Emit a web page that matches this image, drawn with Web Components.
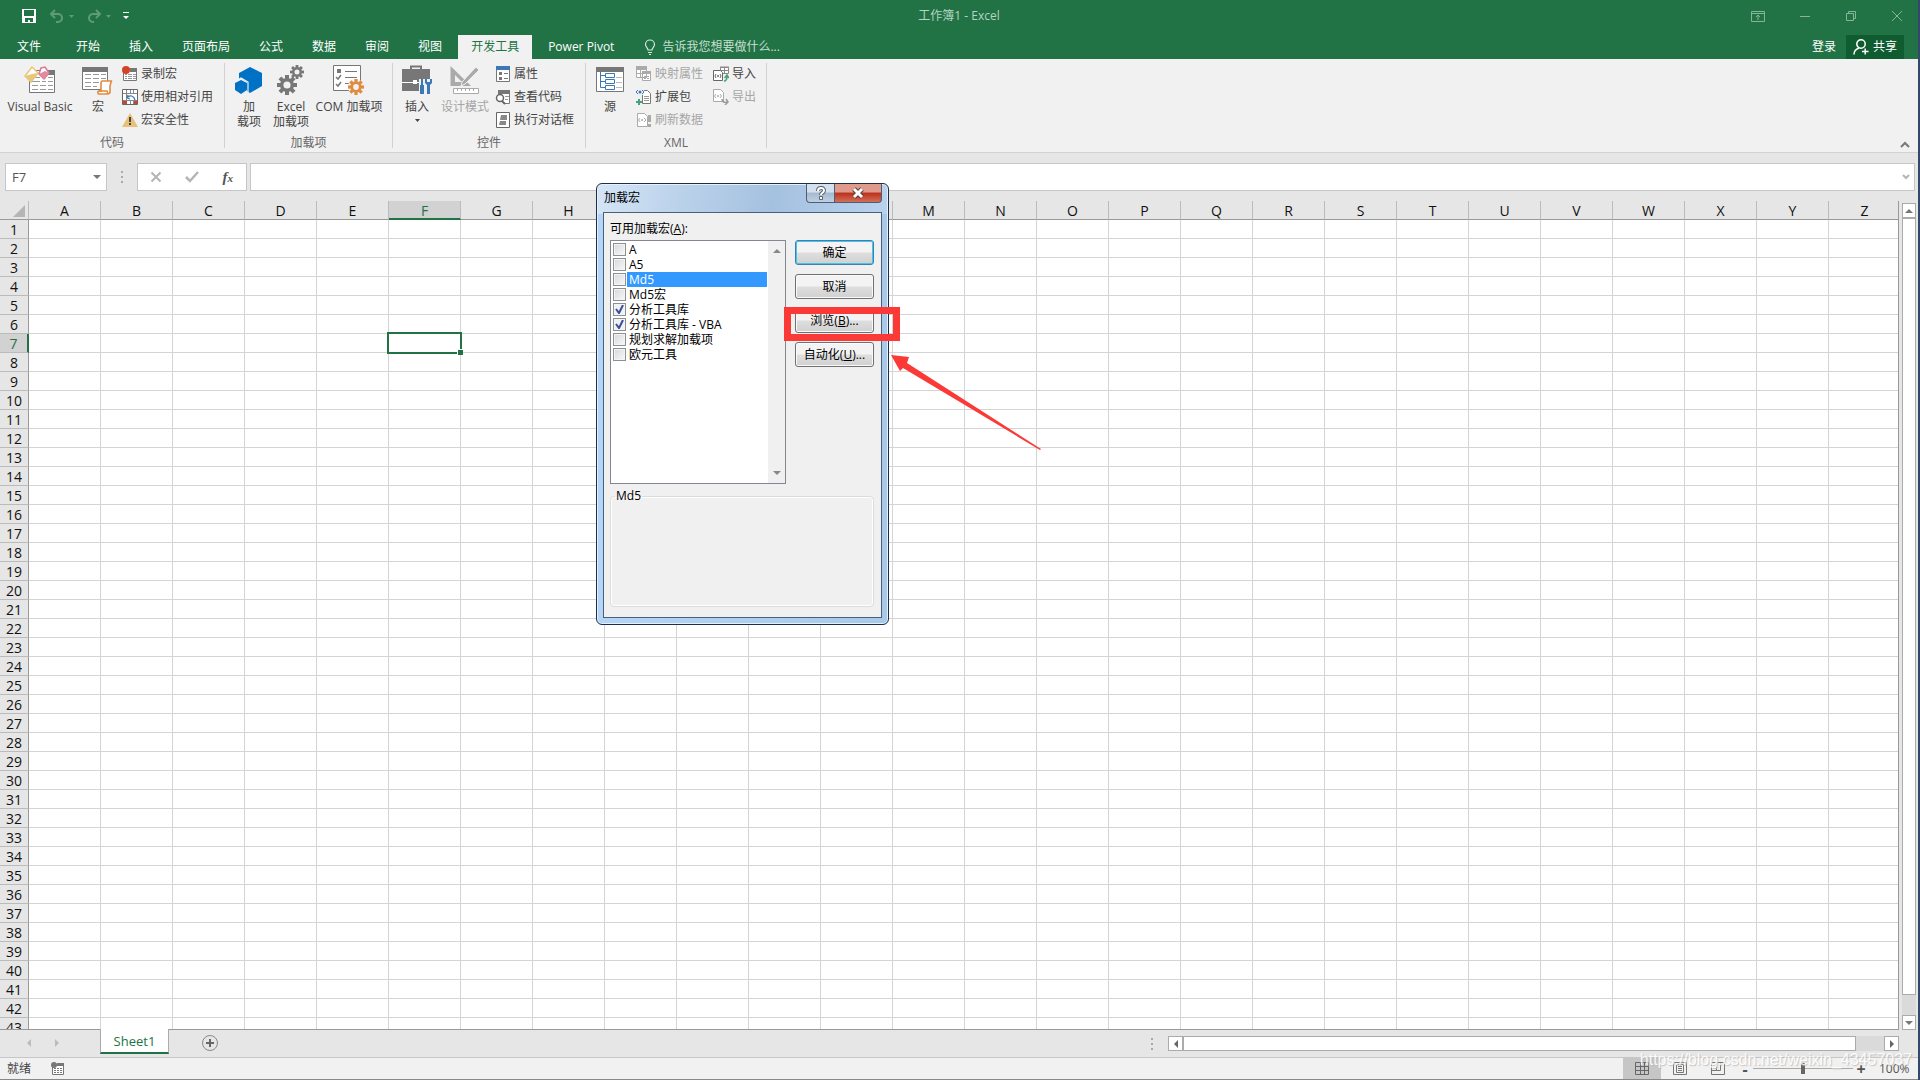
<!DOCTYPE html>
<html lang="zh-CN">
<head>
<meta charset="utf-8">
<title>工作簿1 - Excel</title>
<style>
  html, body { margin: 0; height: 100%; }
  body {
    font: 12px/16px "Open Sans", "Noto Sans", "Noto Sans CJK SC", sans-serif;
    color: #444;
    overflow: hidden;
  }
</style>
</head>
<body>
<excel-app></excel-app>

<script>
const ICONS = {
  save: [16, 16, '<path fill="#fff" d="M1 1h14v14H1z"/><path fill="#217346" d="M3 2h10v6H3zM4 10h8v4H9v-2H7v2H4z"/>'],
  undo: [16, 14, '<path d="M6 1L2 5l4 4M2 5h7a4 4 0 0 1 0 8H7" fill="none" stroke="#5d9b79" stroke-width="2"/>'],
  redo: [16, 14, '<path d="M10 1l4 4-4 4M14 5H7a4 4 0 0 0 0 8h1" fill="none" stroke="#5d9b79" stroke-width="2"/>'],
  caret: [5, 3, '<path d="M0 0h5L2.5 3z" fill="currentColor"/>'],
  custom: [6, 8, '<path d="M0 0h6v1H0zM0 4h6L3 7z" fill="#fff"/>'],
  ribbonopt: [14, 12, '<path d="M.5 1.500h13v10H.5zM.5 3.500h13M7 10V5M5 7l2-2 2 2" fill="none" stroke="#85b59a"/>'],
  min: [12, 12, '<path d="M1 6.500h10" stroke="#85b59a"/>'],
  restore: [12, 12, '<path d="M1.500 3.500h7v7h-7zM3.500 3V1.500h7v7H9" fill="none" stroke="#85b59a"/>'],
  close: [12, 12, '<path d="M1 1l10 10M11 1L1 11" stroke="#85b59a"/>'],
  bulb: [12, 16, '<path d="M4 11c0-2-2.500-3-2.500-5.500a4.500 4.500 0 0 1 9 0C10.500 8 8 9 8 11zM4 13.500h4M5 15.500h2" fill="none" stroke="#d7e8de" stroke-width="1.200"/>'],
  person: [16, 16, '<g fill="none" stroke="#fff" stroke-width="1.500"><circle cx="8" cy="5" r="4.200"/><path d="M1 15.500c0-3.500 2-5.500 5-6.500M9 12.500h6.500M12.200 9.500v6"/></g>'],
  vb: [32, 28, '<path d="M5.500 4.500h25v22h-25z" fill="#fff" stroke="#777"/><path d="M20 4h11v5H16z" fill="#777"/><path d="M8 11.500h8m2 0h4m2 0h5M8 15.500h8m2 0h4m2 0h5M8 19.500h6m2 0h6m2 0h5M8 23.500h6m2 0h6m2 0h5" stroke="#999"/><path d="M8 1l6 6-7 9-6-6z" fill="#fff" stroke="#e8c77d" stroke-width="1.500"/><path d="M1 10l7-2 6-1-7 9z" fill="#e8c77d"/><path d="M17 2l4-1 4 6-5 6-5-5z" fill="#fff" stroke="#d9778d" stroke-width="1.500"/><path d="M15 8l6-3 4 2-5 6z" fill="#e38b9e"/>'],
  macro: [32, 30, '<path d="M.5 2.500h25v22H.5z" fill="#fff" stroke="#777"/><path d="M0 2h26v5H0z" fill="#777"/><path d="M3 9.500h6m2 0h6m2 0h5M3 13.500h6m2 0h6m2 0h5M3 17.500h6m2 0h6M3 21.500h6m2 0h4" stroke="#999"/><path d="M20 16h10c-2 1-1 3-2 5v6c0 2-2 2-3 2h-8c-1 0-2-3 0-3h2V18c0-2 1-2 1-2z" fill="#fff" stroke="#e08b3e" stroke-width="1.600"/><path d="M17 26h8l1 3" fill="none" stroke="#e08b3e" stroke-width="1.500"/>'],
  record: [16, 16, '<path d="M1.500 2.500h13v12h-13z" fill="#fff" stroke="#777"/><path d="M8 2h7v4H8z" fill="#777"/><path d="M3 8.500h2m1 0h4m1 0h3M3 10.500h2m1 0h4m1 0h3M3 12.500h2m1 0h4m1 0h3" stroke="#999"/><circle cx="4" cy="4" r="4" fill="#d04525"/>'],
  relative: [16, 16, '<path d="M.5.500h15v15H.5z" fill="#fff" stroke="#666"/><path d="M1 4.500h14M1 11.500h14M4.500 1v14M8.500 1v3m0 8v3M11.500 1v14" stroke="#888"/><path d="M5 5h8v6H5z" fill="#fff"/><path d="M1 12h4v3H1zM12 12h3v3h-3z" fill="#c8472c"/><path d="M5 9l3 1M5 9l1-3M5 9c3-4 7-2 8 2" fill="none" stroke="#3b78b8" stroke-width="1.300"/>'],
  warn: [16, 14, '<path d="M8 0l8 14H0z" fill="#e8c07a"/><path d="M7 4h2v5H7zM7 10h2v2H7z" fill="#444"/>'],
  hex: [28, 28, '<path fill="#0072c6" d="M15 1l12 6v13l-12 7-3-2v-9l-6-4-2 1V7zM6 14l6 3v7l-6 4-6-4v-7z"/><path d="M3 14l3-2 7 4v10" fill="none" stroke="#f1f1f1" stroke-width="1.200"/>'],
  props: [14, 16, '<path d="M.5.500h13v15H.5z" fill="#fff" stroke="#777"/><path d="M0 0h14v4H0z" fill="#3b78b8"/><path d="M3 6h3v3H3zM3 11h3v3H3z" fill="#777"/><path d="M8 7.500h4M8 12.500h4" stroke="#777"/>'],
  viewcode: [16, 16, '<path d="M3.500 2.500h11v12h-5" fill="#fff" stroke="#777"/><path d="M3 1h12v4H3z" fill="#777"/><path d="M10 7.500h4M10 10.500h3" stroke="#999"/><circle cx="5" cy="9" r="3.500" fill="#fff" stroke="#666" stroke-width="1.500"/><path d="M7 12l3 3" stroke="#666" stroke-width="2"/>'],
  rundlg: [14, 16, '<path d="M.5.500h13v15H.5z" fill="#fff" stroke="#666"/><path d="M5 3h6v5H4zM4 9h6v4H3z" fill="#888"/>'],
  toolbox: [32, 30, '<path d="M10 4V1.500h10V4" fill="none" stroke="#777" stroke-width="2"/><path d="M1 4h28v13H1zM1 18h18v8H1z" fill="#777"/><path d="M1 17.500h11m4 0h13" stroke="#fff"/><path d="M12 15h4v4h-4z" fill="#fff"/><path d="M18 14h13v15H18z" fill="#f1f1f1"/><path d="M20 14h2v7h-2zM19 20h4v9h-4zM24 14v4l2 2v9h3v-9l2-2v-4h-2v3h-3v-3z" fill="#3b78b8"/>'],
  design: [32, 30, '<path d="M1.500 1v20H22z" fill="#aaa"/><path d="M6 10v7h7z" fill="#f1f1f1"/><path d="M12 21l1-4L27 2l3 3-14 14z" fill="#aaa" stroke="#f1f1f1"/><path d="M4.500 23.500h25v5h-25z" fill="#fff" stroke="#aaa"/><path d="M8.500 24v2m4-2v2m4-2v2m4-2v2m4-2v2" stroke="#aaa"/>'],
  source: [28, 26, '<path d="M.5.500h27v24H.5z" fill="#fff" stroke="#777"/><path d="M0 0h28v5H0z" fill="#777"/><path d="M20 10.500h6m-6 5h6m-6 5h6" stroke="#bbb"/><path d="M4.500 5v15.500H9M4.500 8.500H9m-4.500 6H9" fill="none" stroke="#3b78b8"/><path d="M9.500 6.500h9v4h-9zM9.500 12.500h9v4h-9zM9.500 18.500h9v4h-9z" fill="#fff" stroke="#3b78b8"/>'],
  mapprops: [16, 16, '<path d="M.5.500h10v11H.5zM6.500 6.500h8v8h-8z" fill="#fff" stroke="#aaa"/><path d="M0 0h11v4H0zM6 5h9v3H6z" fill="#aaa"/><path d="M4.500 4v7M1 7.500h5M8 10.500h2m1 0h2M8 12.500h2m1 0h2" stroke="#aaa"/>'],
  expand: [16, 16, '<path d="M6.500 1.500h5l3 3v10h-8z" fill="#fff" stroke="#777"/><path d="M8 7.500h5M8 9.500h5M8 11.500h5" stroke="#999"/><path d="M0 0h8v6H0z" fill="#f1f1f1"/><path d="M2 1L0 3l2 2M6 1l2 2-2 2" fill="none" stroke="#3b78b8"/><circle cx="4" cy="3" r="1.500" fill="#3b78b8"/><path d="M3 10v6M0 13h6" stroke="#45a17a" stroke-width="2"/>'],
  refresh: [16, 16, '<path d="M1.500 1.500h7l3 3v10h-10z" fill="#fff" stroke="#aaa"/><path d="M4 6L2.500 8 4 10M8 6l2 2-2 2" fill="none" stroke="#aaa"/><circle cx="6" cy="8" r="1" fill="#aaa"/><path d="M12 3h3v7h-3zM12 12h3v3h-3z" fill="#aaa"/>'],
  imp: [16, 16, '<path d="M7.500 1.500h8v6h-8z" fill="#fff" stroke="#888"/><path d="M7 1h9M8 4.500h7M11.500 1v6" stroke="#888"/><path d="M.5 4.500h7l2 2v8h-9z" fill="#fff" stroke="#666"/><path d="M3 8l-1 2 1 2M7 8l1 2-1 2" fill="none" stroke="#666"/><circle cx="5" cy="10" r="1" fill="#666"/><path d="M11 15c2 0 3-1 3-5M11.500 12L14 9l2 3" fill="none" stroke="#45a17a" stroke-width="1.500"/>'],
  exp: [16, 16, '<path d="M.5.500h7l3 3v9H.5z" fill="#fff" stroke="#aaa"/><path d="M3 5L1.500 7 3 9M7 5l1.500 2L7 9" fill="none" stroke="#aaa"/><circle cx="5" cy="7" r="1" fill="#aaa"/><path d="M9 10c0 3 2 4 6 3M13 10l2 3-3 3" fill="none" stroke="#999" stroke-width="1.500"/>'],
  cross: [12, 12, '<path d="M1.500 1.500l9 9M10.500 1.500l-9 9" stroke="#b5b5b5" stroke-width="2"/>'],
  tick: [14, 12, '<path d="M1 6l4 4 8-9" fill="none" stroke="#b5b5b5" stroke-width="2.500"/>'],
  up: [10, 7, '<path d="M1 6l4-4 4 4" fill="none" stroke="#777" stroke-width="2"/>'],
  down: [8, 6, '<path d="M1 1l3 3 3-3" fill="none" stroke="#b5b5b5" stroke-width="2"/>'],
  dots: [3, 12, '<path d="M0 0h2v2H0zM0 5h2v2H0zM0 10h2v2H0z" fill="#aaa"/>'],
  corner: [12, 12, '<path d="M12 0v12H0z" fill="#b5b5b5"/>'],
  plus: [16, 16, '<circle cx="8" cy="8" r="7.500" fill="none" stroke="#888"/><path d="M8 4v8M4 8h8" stroke="#666" stroke-width="2"/>'],
  triL: [4, 8, '<path d="M4 0v8L0 4z" fill="currentColor"/>'],
  triR: [4, 8, '<path d="M0 0v8l4-4z" fill="currentColor"/>'],
  triU: [8, 4, '<path d="M0 4h8L4 0z" fill="currentColor"/>'],
  triD: [8, 4, '<path d="M0 0h8L4 4z" fill="currentColor"/>'],
  recstat: [14, 14, '<path d="M1.500 3.500h11v9h-11z" fill="#fff" stroke="#777"/><path d="M6 1h7v3H6z" fill="#777"/><path d="M3 6.500h2m1 0h2m1 0h2M3 8.500h2m1 0h2m1 0h2M3 10.500h2m1 0h2m1 0h2" stroke="#777"/><circle cx="3" cy="3" r="3" fill="#777"/>'],
  vnormal: [14, 14, '<path d="M.5.500h13v12H.5zM.5 4.500h13M.5 8.500h13M5.500.500v12M9.500.500v12" fill="none" stroke="#666"/>'],
  vpage: [14, 14, '<path d="M.5.500h13v12H.5zM3.500 2.500h7v8h-7zM5 4.500h4M5 6.500h4M5 8.500h4" fill="none" stroke="#777"/>'],
  vbreak: [14, 14, '<path d="M.5.500h13v12H.5zM1 8.500h4.500V1M5.500 8.500h4V1" fill="none" stroke="#777"/>'],
  help: [12, 14, '<path d="M3 5c0-4 6-4 6-.5C9 7 6 6.500 6 9" fill="none" stroke="#5a6472" stroke-width="4"/><path d="M3 5c0-4 6-4 6-.5C9 7 6 6.500 6 9" fill="none" stroke="#fff" stroke-width="2"/><path d="M4.500 10.500h3v3h-3z" fill="#fff" stroke="#5a6472"/>'],
  xbold: [14, 12, '<path d="M3 2l8 8M11 2l-8 8" stroke="#5f3a3a" stroke-width="5"/><path d="M3 2l8 8M11 2l-8 8" stroke="#fff" stroke-width="3"/>']
};

// gear: four crossed bars give the eight teeth
function gear(cx, cy, r, color) {
  let teeth = '';
  for (let i = 0; i < 4; i++) {
    teeth += `<rect x="${cx - r / 5}" y="${cy - r}" width="${r / 2.5}" height="${r * 2}" fill="${color}" transform="rotate(${i * 45} ${cx} ${cy})"/>`;
  }
  return `<g>${teeth}<circle cx="${cx}" cy="${cy}" r="${r * 0.7}" fill="${color}"/><circle cx="${cx}" cy="${cy}" r="${r * 0.36}" fill="#f1f1f1"/></g>`;
}
ICONS.gears = [28, 30, gear(20, 7, 7, '#777') + gear(10, 20, 10, '#777')];
ICONS.com = [32, 30, '<path d="M.5.500h27v25H.5z" fill="#fff" stroke="#777"/><path d="M4 4h4v4H4z" fill="#777"/><path d="M12 6.500h12M12 12.500h12M12 18.500h5" stroke="#777"/><path d="M3 12l2 2 3-4M3 19l2 2 3-4" fill="none" stroke="#777" stroke-width="1.500"/><circle cx="23" cy="22" r="8" fill="#f1f1f1"/>' + gear(23, 22, 8, '#e08b3e')];

class XIcon extends HTMLElement {
  connectedCallback() {
    const [w, h, body] = ICONS[this.getAttribute('name')];
    this.attachShadow({ mode: 'open' }).innerHTML = `
      <style>
        :host { display: inline-flex; flex: none; }
        svg { display: block; }
      </style>
      <svg width="${w}" height="${h}" viewBox="0 0 ${w} ${h}" aria-hidden="true">${body}</svg>`;
  }
}

class TitleBar extends HTMLElement {
  constructor() {
    super();
    this.attachShadow({ mode: 'open' }).innerHTML = `
      <style>
        :host { display: grid; grid-template-columns: 1fr auto 1fr; align-items: center; height: 32px; background: #217346; color: #b5d3c1; }
        div { display: flex; align-items: center; }
        .quick { padding-left: 21px; gap: 12px; }
        .pair { gap: 4px; color: #5d9b79; }
        .win { justify-content: flex-end; gap: 34px; padding-right: 15px; }
        button { display: flex; padding: 0; border: 0; background: none; color: inherit; }
      </style>
      <div class="quick">
        <button aria-label="保存"><x-icon name="save"></x-icon></button>
        <div class="pair"><button aria-label="撤消"><x-icon name="undo"></x-icon></button><x-icon name="caret"></x-icon></div>
        <div class="pair"><button aria-label="恢复"><x-icon name="redo"></x-icon></button><x-icon name="caret"></x-icon></div>
        <button aria-label="自定义"><x-icon name="custom"></x-icon></button>
      </div>
      <span><slot></slot></span>
      <div class="win">
        <button aria-label="功能区选项"><x-icon name="ribbonopt"></x-icon></button>
        <button aria-label="最小化"><x-icon name="min"></x-icon></button>
        <button aria-label="还原"><x-icon name="restore"></x-icon></button>
        <button aria-label="关闭"><x-icon name="close"></x-icon></button>
      </div>`;
  }
}

class RibbonTabs extends HTMLElement {
  constructor() {
    super();
    const tabs = ['文件', '开始', '插入', '页面布局', '公式', '数据', '审阅', '视图', '开发工具', 'Power Pivot'];
    this.attachShadow({ mode: 'open' }).innerHTML = `
      <style>
        :host { display: flex; align-items: flex-end; height: 27px; background: #217346; color: #fff; }
        nav { display: flex; gap: 3px; padding-left: 4px; }
        button { display: flex; align-items: center; height: 24px; padding: 0 13px; border: 0; background: none; color: inherit; font: inherit; white-space: nowrap; }
        .file { margin-right: 6px; }
        .on { background: #f1f1f1; color: #217346; }
        .tell { gap: 6px; margin-left: 4px; color: #c8dfd1; }
        .right { display: flex; margin-left: auto; margin-right: 14px; align-items: center; }
        .login { padding-right: 10px; }
        .share { gap: 4px; padding: 0 7px; background: #0e5c2f; }
      </style>
      <nav>${tabs.map((t, i) => `<button class="${i === 0 ? 'file' : ''}${t === '开发工具' ? 'on' : ''}">${t}</button>`).join('')}</nav>
      <button class="tell"><x-icon name="bulb"></x-icon>告诉我您想要做什么...</button>
      <div class="right">
        <button class="login">登录</button>
        <button class="share"><x-icon name="person"></x-icon>共享</button>
      </div>`;
  }
}

class RibbonGroup extends HTMLElement {
  constructor() {
    super();
    this.attachShadow({ mode: 'open' }).innerHTML = `
      <style>
        :host { display: flex; flex-direction: column; box-sizing: border-box; margin: 4px 0; border-right: 1px solid #d2d2d2; }
        .body { display: flex; flex: none; height: 72px; }
        .name { flex: none; text-align: center; color: #666; line-height: 16px; }
      </style>
      <div class="body"><slot></slot></div>
      <div class="name"></div>`;
  }
  connectedCallback() {
    this.shadowRoot.querySelector('.name').textContent = this.getAttribute('label');
  }
}

class BigButton extends HTMLElement {
  connectedCallback() {
    this.attachShadow({ mode: 'open' }).innerHTML = `
      <style>
        :host { display: block; flex: none; }
        button { display: flex; flex-direction: column; align-items: center; width: 100%; padding: 1px 0 0; border: 0; background: none; color: #444; font: inherit; line-height: 15px; white-space: nowrap; }
        button:disabled { color: #a6a6a6; }
        .pic { display: flex; align-items: center; height: 32px; margin-bottom: 3px; }
        .drop { margin-top: 5px; }
      </style>
      <button ${this.hasAttribute('disabled') ? 'disabled' : ''}>
        <span class="pic"><x-icon name="${this.getAttribute('icon')}"></x-icon></span>
        <slot></slot>
        ${this.hasAttribute('drop') ? '<x-icon class="drop" name="caret"></x-icon>' : ''}
      </button>`;
  }
}

class SmallButton extends HTMLElement {
  connectedCallback() {
    this.attachShadow({ mode: 'open' }).innerHTML = `
      <style>
        :host { display: block; }
        button { display: flex; align-items: center; gap: 3px; height: 23px; padding: 0; border: 0; background: none; color: #444; font: inherit; white-space: nowrap; }
        button:disabled { color: #a6a6a6; }
        .pic { display: flex; justify-content: center; width: 16px; }
      </style>
      <button ${this.hasAttribute('disabled') ? 'disabled' : ''}>
        <span class="pic"><x-icon name="${this.getAttribute('icon')}"></x-icon></span><slot></slot>
      </button>`;
  }
}

class RibbonBar extends HTMLElement {
  constructor() {
    super();
    this.attachShadow({ mode: 'open' }).innerHTML = `
      <style>
        :host { display: flex; height: 93px; background: #f1f1f1; border-bottom: 1px solid #d2d2d2; }
        .g1 { width: 225px; } .g2 { width: 168px; } .g3 { width: 193px; } .g4 { width: 181px; }
        .w36 { width: 36px; } .w48 { width: 48px; } .w80 { width: 80px; }
        .col { margin: -1px 0 0 6px; }
        .col + .col { margin-left: 10px; }
        .big + .tight { margin-left: 2px; }
        .fold { margin: auto 8px 4px auto; padding: 0; border: 0; background: none; display: flex; }
      </style>
      <ribbon-group class="g1" label="代码">
        <big-button class="w80" icon="vb">Visual Basic</big-button>
        <big-button class="w36" icon="macro">宏</big-button>
        <div class="col">
          <small-button icon="record">录制宏</small-button>
          <small-button icon="relative">使用相对引用</small-button>
          <small-button icon="warn">宏安全性</small-button>
        </div>
      </ribbon-group>
      <ribbon-group class="g2" label="加载项">
        <big-button class="w48" icon="hex">加<br>载项</big-button>
        <big-button class="w36" icon="gears">Excel<br>加载项</big-button>
        <big-button class="w80" icon="com">COM 加载项</big-button>
      </ribbon-group>
      <ribbon-group class="g3" label="控件">
        <big-button class="w48" icon="toolbox" drop>插入</big-button>
        <big-button class="w48" icon="design" disabled>设计模式</big-button>
        <div class="col">
          <small-button icon="props">属性</small-button>
          <small-button icon="viewcode">查看代码</small-button>
          <small-button icon="rundlg">执行对话框</small-button>
        </div>
      </ribbon-group>
      <ribbon-group class="g4" label="XML">
        <big-button class="big w48" icon="source">源</big-button>
        <div class="col tight">
          <small-button icon="mapprops" disabled>映射属性</small-button>
          <small-button icon="expand">扩展包</small-button>
          <small-button icon="refresh" disabled>刷新数据</small-button>
        </div>
        <div class="col">
          <small-button icon="imp">导入</small-button>
          <small-button icon="exp" disabled>导出</small-button>
        </div>
      </ribbon-group>
      <button class="fold" aria-label="折叠功能区"><x-icon name="up"></x-icon></button>`;
  }
}

class FormulaBar extends HTMLElement {
  constructor() {
    super();
    this.attachShadow({ mode: 'open' }).innerHTML = `
      <style>
        :host { display: flex; padding: 10px 3px 10px 5px; background: #e6e6e6; height: 28px; }
        div { display: flex; align-items: center; box-sizing: border-box; border: 1px solid #c6c6c6; background: #fff; }
        input { flex: 1; min-width: 0; border: 0; padding: 0 6px; outline: 0; background: none; color: #555; font: inherit; }
        button { display: flex; padding: 0; border: 0; background: none; color: #777; }
        .name { width: 102px; padding-right: 5px; }
        .name input { font-size: 13px; }
        .sep { align-self: center; margin: 0 13px 0 14px; }
        .tools { width: 110px; justify-content: space-between; padding: 0 13px 0 12px; margin-right: 3px; }
        .fx { font: italic bold 15px/16px "Liberation Serif", serif; color: #555; }
        .fx small { font-size: 11px; }
        .text { flex: 1; padding-right: 4px; }
      </style>
      <div class="name"><input aria-label="名称框" value="F7"><button aria-label="名称列表"><x-icon name="triD"></x-icon></button></div>
      <x-icon class="sep" name="dots"></x-icon>
      <div class="tools">
        <button aria-label="取消"><x-icon name="cross"></x-icon></button>
        <button aria-label="输入"><x-icon name="tick"></x-icon></button>
        <button class="fx" aria-label="插入函数"><span>f<small>x</small></span></button>
      </div>
      <div class="text"><input aria-label="编辑栏"><button aria-label="展开"><x-icon name="down"></x-icon></button></div>`;
  }
}

class SheetGrid extends HTMLElement {
  constructor() {
    super();
    const letters = 'ABCDEFGHIJKLMNOPQRSTUVWXYZ'.split('');
    let rows = '';
    for (let r = 1; r <= 43; r++) {
      rows += `<tr><th class="${r === 7 ? 'on' : ''}">${r}</th>` +
        letters.map(c => `<td${r === 7 && c === 'F' ? ' class="active"' : ''}></td>`).join('') + '</tr>';
    }
    this.attachShadow({ mode: 'open' }).innerHTML = `
      <style>
        :host { display: flex; flex: 1; min-height: 0; background: #e6e6e6; }
        .view { flex: 1; min-width: 0; overflow: hidden; box-sizing: border-box; border-right: 1px solid #999; border-bottom: 1px solid #999; }
        table { table-layout: fixed; width: 1901px; border-collapse: separate; border-spacing: 0; background: #fff; }
        col.head { width: 29px; }
        th, td { box-sizing: border-box; padding: 0; overflow: hidden; }
        th { padding-top: 2px; font-size: 14px; line-height: 16px; font-weight: normal; color: #111; background: #e6e6e6; }
        thead th { height: 19px; border-right: 1px solid #bbb; border-bottom: 1px solid #999; }
        thead th.on { background: #d2d2d2; color: #217346; border-bottom: 2px solid #217346; line-height: 15px; }
        thead x-icon { display: flex; justify-content: flex-end; padding-right: 3px; }
        tbody th { height: 19px; border-right: 1px solid #999; border-bottom: 1px solid #bbb; }
        tbody th.on { background: #d2d2d2; color: #217346; border-right: 2px solid #217346; }
        td { border-right: 1px solid #d4d4d4; border-bottom: 1px solid #d4d4d4; }
        td.active { position: relative; overflow: visible; }
        td.active::before { content: ""; position: absolute; inset: -2px; border: 2px solid #217346; }
        td.active::after { content: ""; position: absolute; right: -3px; bottom: -3px; width: 5px; height: 5px; background: #217346; border: 1px solid #fff; border-width: 1px 0 0 1px; }
        .bar { display: flex; flex-direction: column; width: 14px; margin: 2px 2px 0 3px; background: #dadada; }
        .bar button, .thumb { display: flex; align-items: center; justify-content: center; box-sizing: border-box; padding: 0; border: 1px solid #ababab; background: #fff; color: #777; }
        .bar button { height: 15px; }
        .thumb { flex: 1; margin-bottom: 20px; }
      </style>
      <div class="view">
        <table>
          <colgroup><col class="head"><col span="26"></colgroup>
          <thead><tr><th><x-icon name="corner"></x-icon></th>${letters.map(c => `<th class="${c === 'F' ? 'on' : ''}">${c}</th>`).join('')}</tr></thead>
          <tbody>${rows}</tbody>
        </table>
      </div>
      <div class="bar">
        <button aria-label="向上"><x-icon name="triU"></x-icon></button>
        <div class="thumb"></div>
        <button aria-label="向下"><x-icon name="triD"></x-icon></button>
      </div>`;
  }
}

class SheetTabs extends HTMLElement {
  constructor() {
    super();
    this.attachShadow({ mode: 'open' }).innerHTML = `
      <style>
        :host { display: flex; height: 27px; background: #e6e6e6; border-bottom: 1px solid #c6c6c6; }
        button { display: flex; align-items: center; justify-content: center; padding: 0; border: 0; background: none; font: inherit; color: #bbb; }
        .nav { display: flex; gap: 24px; width: 73px; height: 25px; padding-left: 27px; }
        .tab { box-sizing: border-box; width: 69px; height: 25px; margin-top: -1px; background: #fff; color: #217346; font-size: 13px; border: 1px solid #ababab; border-top: 0; border-bottom: 2px solid #217346; }
        .add { height: 26px; margin-left: 33px; }
        .scroll { display: flex; align-items: center; flex: 0 1 748px; margin: 6px 19px 6px auto; }
        .scroll x-icon.grip { margin-right: 14px; }
        .scroll button { box-sizing: border-box; width: 15px; height: 15px; border: 1px solid #ababab; background: #fff; color: #666; }
        .track { display: flex; flex: 1; height: 15px; background: #dadada; }
        .thumb { flex: 1; margin-right: 28px; box-sizing: border-box; border: 1px solid #ababab; background: #fff; }
      </style>
      <div class="nav">
        <button aria-label="上一个"><x-icon name="triL"></x-icon></button>
        <button aria-label="下一个"><x-icon name="triR"></x-icon></button>
      </div>
      <button class="tab">Sheet1</button>
      <button class="add" aria-label="新工作表"><x-icon name="plus"></x-icon></button>
      <div class="scroll">
        <x-icon class="grip" name="dots"></x-icon>
        <button aria-label="向左"><x-icon name="triL"></x-icon></button>
        <div class="track"><div class="thumb"></div></div>
        <button aria-label="向右"><x-icon name="triR"></x-icon></button>
      </div>`;
  }
}

class StatusBar extends HTMLElement {
  constructor() {
    super();
    this.attachShadow({ mode: 'open' }).innerHTML = `
      <style>
        :host { display: flex; position: relative; align-items: center; height: 21px; background: #f1f1f1; border-bottom: 1px solid #888; padding-left: 7px; }
        button { display: flex; align-items: center; justify-content: center; width: 38px; height: 21px; padding: 0; border: 0; background: none; color: #555; font: 16px/16px "Open Sans", sans-serif; }
        .rec { width: auto; margin-left: 20px; }
        .views { display: flex; margin-left: auto; }
        .views .on { background: #c6c6c6; }
        .zoom { width: 16px; font-weight: bold; }
        input { appearance: none; width: 100px; height: 12px; margin: 0; background: linear-gradient(#aaa, #aaa) center / 100% 1px no-repeat; }
        input::-webkit-slider-thumb { appearance: none; width: 4px; height: 11px; background: #666; }
        output { width: 33px; margin: 0 6px 0 10px; color: #555; }
        .mark { position: absolute; right: 6px; top: -8px; font: 16px/20px "Liberation Sans", sans-serif; color: #fff; opacity: .85; text-shadow: 1px 1px 1px #bbb; pointer-events: none; }
      </style>
      <span>就绪</span>
      <button class="rec" aria-label="录制宏"><x-icon name="recstat"></x-icon></button>
      <div class="views">
        <button class="on" aria-label="普通"><x-icon name="vnormal"></x-icon></button>
        <button aria-label="页面布局"><x-icon name="vpage"></x-icon></button>
        <button aria-label="分页预览"><x-icon name="vbreak"></x-icon></button>
      </div>
      <button class="zoom" aria-label="缩小">-</button>
      <input type="range" aria-label="显示比例" min="0" max="200" value="100">
      <button class="zoom" aria-label="放大">+</button>
      <output>100%</output>
      <span class="mark">https://blog.csdn.net/weixin_43457037</span>`;
  }
}

class AddinDialog extends HTMLElement {
  constructor() {
    super();
    const items = [['A'], ['A5'], ['Md5', 'sel'], ['Md5宏'], ['分析工具库', 'on'], ['分析工具库 - VBA', 'on'], ['规划求解加载项'], ['欧元工具']];
    this.attachShadow({ mode: 'open' }).innerHTML = `
      <style>
        :host { display: flex; flex-direction: column; box-sizing: border-box; width: 293px; height: 442px; padding: 0 6px 6px; border: 1px solid #1c2f45; border-radius: 6px; color: #000;
          background: linear-gradient(100deg, #d5e5f6 0, #bad1ea 30%, #a5c1e0 60%, #b9d3ee 100%) top / 100% 30px no-repeat, linear-gradient(90deg, #b4d5f7, #a9c9ea); box-shadow: inset 0 0 0 1px #e4f0fb; }
        header { display: flex; align-items: flex-start; height: 28px; }
        h1 { margin: 6px auto 0 1px; font: inherit; }
        header button { display: flex; align-items: center; justify-content: center; height: 19px; padding: 0; border: 1px solid #4d5e72; border-top: 0; }
        .help { width: 29px; border-radius: 0 0 0 4px; background: linear-gradient(#d3e0ee 45%, #a5b9cf 50%, #bfd1e4); }
        .x { width: 48px; margin-left: -1px; border-radius: 0 0 4px 0; background: linear-gradient(#e09a8b 45%, #bb2f1c 50%, #d3705a); }
        .client { display: flex; flex-direction: column; flex: 1; padding: 7px 7px 10px 6px; border: 1px solid #4a6078; background: #f0f0f0; }
        .label { height: 20px; line-height: 18px; }
        .row { display: flex; gap: 9px; }
        .list { display: flex; box-sizing: border-box; width: 176px; height: 244px; border: 1px solid #828790; background: #fff; }
        ul { flex: 1; margin: 0; padding: 1px 1px 0 2px; list-style: none; }
        li { display: flex; align-items: center; height: 15px; white-space: nowrap; }
        li input { appearance: none; flex: none; box-sizing: border-box; width: 13px; height: 13px; margin: 0 1px 0 0; border: 1px solid #8e8f8f; background: linear-gradient(135deg, #d5d8dc, #f8f8f8); box-shadow: inset 0 0 0 1px #f4f4f4; }
        li input:checked { background: #eef1f6 url("data:image/svg+xml,%3Csvg xmlns='http://www.w3.org/2000/svg' viewBox='0 0 11 11'%3E%3Cpath d='M2 5l3 4 4-8' fill='none' stroke='%233c4f94' stroke-width='2'/%3E%3C/svg%3E") center / 11px no-repeat; }
        li label { flex: 1; padding-left: 2px; line-height: 15px; }
        .sel label { background: #3399ff; color: #fff; }
        .bar { display: flex; flex-direction: column; justify-content: space-between; align-items: center; width: 17px; padding: 8px 0; box-sizing: border-box; background: #f0f0f0; color: #888; }
        .btns { display: flex; flex-direction: column; gap: 9px; flex: 1; }
        .btns button { height: 25px; padding: 0; border: 1px solid #707070; border-radius: 3px; background: linear-gradient(#f3f3f3 48%, #dedede 52%, #d0d0d0); box-shadow: inset 0 0 0 1px #fafafa; color: #000; font: inherit; }
        .btns .ok { border-color: #3c7fb1; box-shadow: inset 0 0 0 1px #48c4ea; }
        fieldset { flex: 1; min-height: 0; margin: 4px 0 0; padding: 0 4px; border: 1px solid #dcdcdc; border-radius: 4px; box-shadow: inset 0 0 0 1px #fff; }
        legend { padding: 0 1px; }
      </style>
      <header>
        <h1>加载宏</h1>
        <button class="help" aria-label="帮助"><x-icon name="help"></x-icon></button>
        <button class="x" aria-label="关闭"><x-icon name="xbold"></x-icon></button>
      </header>
      <div class="client">
        <div class="label">可用加载宏(<u>A</u>):</div>
        <div class="row">
          <div class="list">
            <ul>${items.map(([t, s], i) => `<li class="${s === 'sel' ? 'sel' : ''}"><input type="checkbox" id="i${i}"${s === 'on' ? ' checked' : ''}><label for="i${i}">${t}</label></li>`).join('')}</ul>
            <div class="bar"><x-icon name="triU"></x-icon><x-icon name="triD"></x-icon></div>
          </div>
          <div class="btns">
            <button class="ok">确定</button>
            <button>取消</button>
            <button>浏览(<u>B</u>)...</button>
            <button>自动化(<u>U</u>)...</button>
          </div>
        </div>
        <fieldset><legend>Md5</legend></fieldset>
      </div>`;
  }
}

// red frame and arrow pointing at the browse button
class CalloutMark extends HTMLElement {
  constructor() {
    super();
    this.attachShadow({ mode: 'open' }).innerHTML = `
      <style>:host { display: block; } svg { display: block; }</style>
      <svg width="260" height="146" viewBox="0 0 260 146" aria-hidden="true">
        <path d="M3.500 3.500h109v27h-109z" fill="none" stroke="#fb3a38" stroke-width="7"/>
        <path d="M107 48l18 2-2 6L257 142l-1 1L119 61l-3 3z" fill="#fb3a38"/>
      </svg>`;
  }
}

class ExcelApp extends HTMLElement {
  constructor() {
    super();
    this.attachShadow({ mode: 'open' }).innerHTML = `
      <style>
        :host { display: flex; flex-direction: column; position: relative; box-sizing: border-box; height: 100vh; border-right: 2px solid #34486b; background: #e6e6e6; }
        addin-dialog { position: absolute; left: 596px; top: 183px; }
        callout-mark { position: absolute; left: 784px; top: 307px; }
      </style>
      <title-bar>工作簿1 - Excel</title-bar>
      <ribbon-tabs></ribbon-tabs>
      <ribbon-bar></ribbon-bar>
      <formula-bar></formula-bar>
      <sheet-grid></sheet-grid>
      <sheet-tabs></sheet-tabs>
      <status-bar></status-bar>
      <addin-dialog></addin-dialog>
      <callout-mark></callout-mark>`;
  }
}

customElements.define('x-icon', XIcon);
customElements.define('title-bar', TitleBar);
customElements.define('ribbon-tabs', RibbonTabs);
customElements.define('ribbon-group', RibbonGroup);
customElements.define('big-button', BigButton);
customElements.define('small-button', SmallButton);
customElements.define('ribbon-bar', RibbonBar);
customElements.define('formula-bar', FormulaBar);
customElements.define('sheet-grid', SheetGrid);
customElements.define('sheet-tabs', SheetTabs);
customElements.define('status-bar', StatusBar);
customElements.define('addin-dialog', AddinDialog);
customElements.define('callout-mark', CalloutMark);
customElements.define('excel-app', ExcelApp);
</script>
</body>
</html>
